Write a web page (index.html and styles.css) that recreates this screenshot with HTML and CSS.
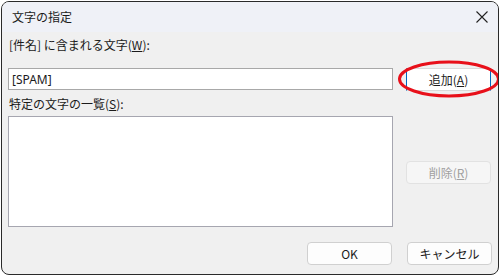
FILE: index.html
```html
<!DOCTYPE html>
<html lang="ja">
<head>
  <meta charset="UTF-8">
  <title>文字の指定</title>
  <link rel="stylesheet" href="styles.css">
</head>
<body>

  <div class="window">
    <div class="titlebar">
      <span class="title">文字の指定</span>
      <svg class="close" width="12" height="12" viewBox="0 0 12 12">
        <path d="M0.5 0.5 L11.5 11.5 M11.5 0.5 L0.5 11.5" stroke="#222" stroke-width="1.1" fill="none"/>
      </svg>
    </div>

    <div class="content">
      <div class="label first">[件名] に含まれる文字(<u>W</u>):</div>

      <div class="row">
        <input type="text" class="textbox" value="[SPAM]">
        <div class="btn-wrap">
          <button class="btn default">追加(<u>A</u>)</button>
          <svg class="mark" width="104" height="40" viewBox="0 0 104 40">
            <ellipse cx="52" cy="20" rx="49.5" ry="17" fill="none" stroke="#e8101a" stroke-width="3"/>
          </svg>
        </div>
      </div>

      <div class="label">特定の文字の一覧(<u>S</u>):</div>

      <div class="row">
        <div class="listbox"></div>
        <div class="side">
          <button class="btn" disabled>削除(<u>R</u>)</button>
        </div>
      </div>

      <div class="footer">
        <button class="btn">OK</button>
        <button class="btn">キャンセル</button>
      </div>
    </div>
  </div>

</body>
</html>
```

FILE: styles.css
```css
body {
  margin: 0;
  background: #ffffff;
  font-family: "Noto Sans CJK JP", "Noto Sans", sans-serif;
  font-size: 12px;
  color: #1b1b1b;
}

.window {
  margin: 1px 0 0 1px;
  width: 496px;
  height: 272px;
  border: 1px solid #2a2a2a;
  border-radius: 8px;
  overflow: hidden;
  background: #f0f0f0;
}

.titlebar {
  height: 30px;
  background: #eff1f7;
  display: flex;
  align-items: center;
  justify-content: space-between;
  padding: 0 10px 0 10px;
}

.title {
  font-size: 12px;
  margin-top: -1px;
}

.close {
  display: block;
  margin-top: -1px;
}

.content {
  padding: 0 6px;
}

.label {
  line-height: 16px;
  height: 16px;
  margin-top: 5px;
  padding-left: 1px;
}

.row {
  display: flex;
  gap: 13px;
}

.label.first + .row {
  margin-top: 15px;
}

.label + .row {
  margin-top: 4px;
}

.textbox {
  box-sizing: border-box;
  width: 385px;
  height: 22px;
  margin: 0;
  border: 1px solid #a8a8a8;
  background: #ffffff;
  padding: 0 3px;
  font-family: "Noto Sans", "Noto Sans CJK JP", sans-serif;
  font-size: 12px;
  color: #1b1b1b;
  outline: none;
}

.btn-wrap {
  position: relative;
}

.btn {
  box-sizing: border-box;
  width: 85px;
  height: 23px;
  margin: 0;
  padding: 0;
  border: 1px solid #d0d0d0;
  border-radius: 4px;
  background: #fdfdfd;
  font-family: "Noto Sans CJK JP", "Noto Sans", sans-serif;
  font-size: 12px;
  color: #1b1b1b;
}

.btn.default {
  border-radius: 0;
  border-color: #dadada #0067c0;
  background: #ffffff;
}

.btn:disabled {
  background: #f6f6f6;
  border-color: #e2e2e2;
  color: #a0a0a0;
}

.mark {
  position: absolute;
  left: -9px;
  top: -9px;
}

.listbox {
  box-sizing: border-box;
  width: 385px;
  height: 111px;
  border: 1px solid #a6a6b0;
  background: #ffffff;
}

.side {
  padding-top: 45px;
}

.footer {
  display: flex;
  justify-content: flex-end;
  gap: 15px;
  margin-top: 15px;
}
```
